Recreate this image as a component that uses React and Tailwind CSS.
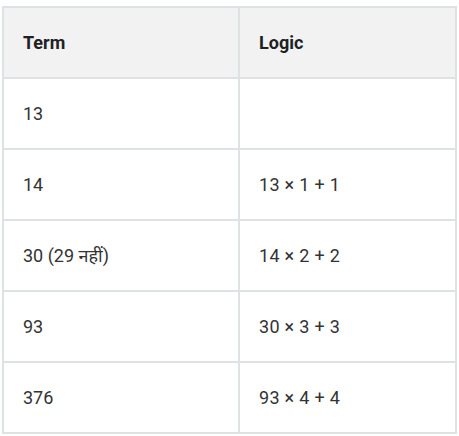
export default function App() {
  const rows = [
    ["13", ""],
    ["14", "13 × 1 + 1"],
    ["30 (29 नहीं)", "14 × 2 + 2"],
    ["93", "30 × 3 + 3"],
    ["376", "93 × 4 + 4"],
  ];
  return (
    <div className="w-[459px] h-[436px] bg-white pt-[6px] pl-[2px]" style={{ fontFamily: "Roboto, 'Noto Sans', sans-serif" }}>
      <table className="w-[455px] border-collapse text-[18px] text-[#333]">
        <thead>
          <tr className="bg-[#f2f2f2] text-[#202124]">
            <th className="w-[236px] h-[71px] border-2 border-[#dfe2e5] text-left font-bold pl-[19px]">Term</th>
            <th className="h-[71px] border-2 border-[#dfe2e5] text-left font-bold pl-[19px]">Logic</th>
          </tr>
        </thead>
        <tbody>
          {rows.map((r, i) => (
            <tr key={i}>
              <td className="h-[71px] border-2 border-[#dfe2e5] pl-[19px]">{r[0]}</td>
              <td className="h-[71px] border-2 border-[#dfe2e5] pl-[19px] tracking-[0.3px]">{r[1]}</td>
            </tr>
          ))}
        </tbody>
      </table>
    </div>
  );
}
